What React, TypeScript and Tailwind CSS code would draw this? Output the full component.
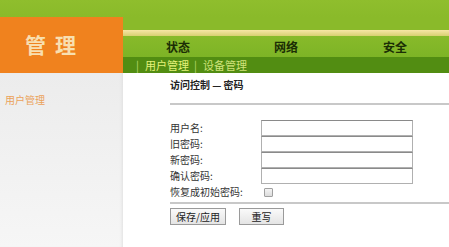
import React from "react";

const font = { fontFamily: '"Noto Sans CJK SC", "Noto Sans", sans-serif' };

function Row({ label, children }: { label: string; children: React.ReactNode }) {
  return (
    <div className="flex h-[16px] items-center">
      <div className="w-[91px] text-[10px] leading-none text-[#333]">{label}</div>
      {children}
    </div>
  );
}

function Field() {
  return <div className="h-[16px] w-[152px] border border-[#b0b0b0] border-t-[#8a8a8a] bg-white" />;
}

export default function App() {
  return (
    <div className="h-[247px] w-[449px] overflow-hidden bg-white" style={font}>
      <div className="h-[17px] bg-gradient-to-b from-[#8fbe2d] to-[#8aba2a]" />
      <div className="flex h-[230px]">
        <div className="flex w-[123px] flex-col">
          <div className="flex h-[56px] items-center gap-[9px] bg-[#f0821e] pb-[2px] pl-[25px] text-[21px] font-bold leading-none text-[#f8dfb0]">
            <span>管</span>
            <span>理</span>
          </div>
          <div className="flex-1 bg-gradient-to-b from-[#ececec] to-[#f6f6f6] pl-[5px] pt-[22px] shadow-[inset_-3px_0_3px_-2px_#e0e0e0]">
            <div className="text-[10px] leading-none text-[#eba25a]">用户管理</div>
          </div>
        </div>
        <div className="flex flex-1 flex-col">
          <div className="h-[13px] bg-[#8aba2a]" />
          <div className="h-[6px] bg-gradient-to-b from-[#f7e6a6] to-[#d8d070]" />
          <div className="flex h-[21px] items-center bg-gradient-to-b from-[#88ba2a] to-[#7db426] text-[12px] font-bold leading-none text-[#1b2e05]">
            <span className="ml-[43px]">状态</span>
            <span className="ml-[84px]">网络</span>
            <span className="ml-[85px]">安全</span>
          </div>
          <div className="flex h-[16px] items-center bg-[#528d12] text-[11px] leading-none">
            <span className="ml-[13px] text-[#b8d870]">|</span>
            <span className="ml-[6px] text-[#e4f27a]">用户管理</span>
            <span className="ml-[5px] text-[#b8d870]">|</span>
            <span className="ml-[6px] text-[#cfe27a]">设备管理</span>
          </div>
          <div className="flex flex-col pl-[47px]">
            <div className="mt-[7px] text-[10px] font-bold leading-none text-[#222]">访问控制 — 密码</div>
            <div className="mt-[13px] h-[2px] bg-[#c8c8c8]" />
            <div className="mt-[15px] flex flex-col">
              <Row label="用户名:"><Field /></Row>
              <Row label="旧密码:"><Field /></Row>
              <Row label="新密码:"><Field /></Row>
              <Row label="确认密码:"><Field /></Row>
              <Row label="恢复成初始密码:">
                <div className="ml-[3px] h-[9px] w-[9px] rounded-[1px] border border-[#a0a0a0] bg-gradient-to-b from-[#f4f4f4] to-[#dcdcdc]" />
              </Row>
            </div>
            <div className="mt-[2px] h-[2px] bg-[#c8c8c8]" />
            <div className="mt-[4px] flex gap-[13px]">
              <button className="h-[17px] w-[56px] border border-[#9a9a9a] bg-gradient-to-b from-[#fafafa] to-[#e4e4e4] text-[10px] leading-none text-[#222]">保存/应用</button>
              <button className="h-[17px] w-[45px] border border-[#9a9a9a] bg-gradient-to-b from-[#fafafa] to-[#e4e4e4] text-[10px] leading-none text-[#222]">重写</button>
            </div>
          </div>
        </div>
      </div>
    </div>
  );
}
